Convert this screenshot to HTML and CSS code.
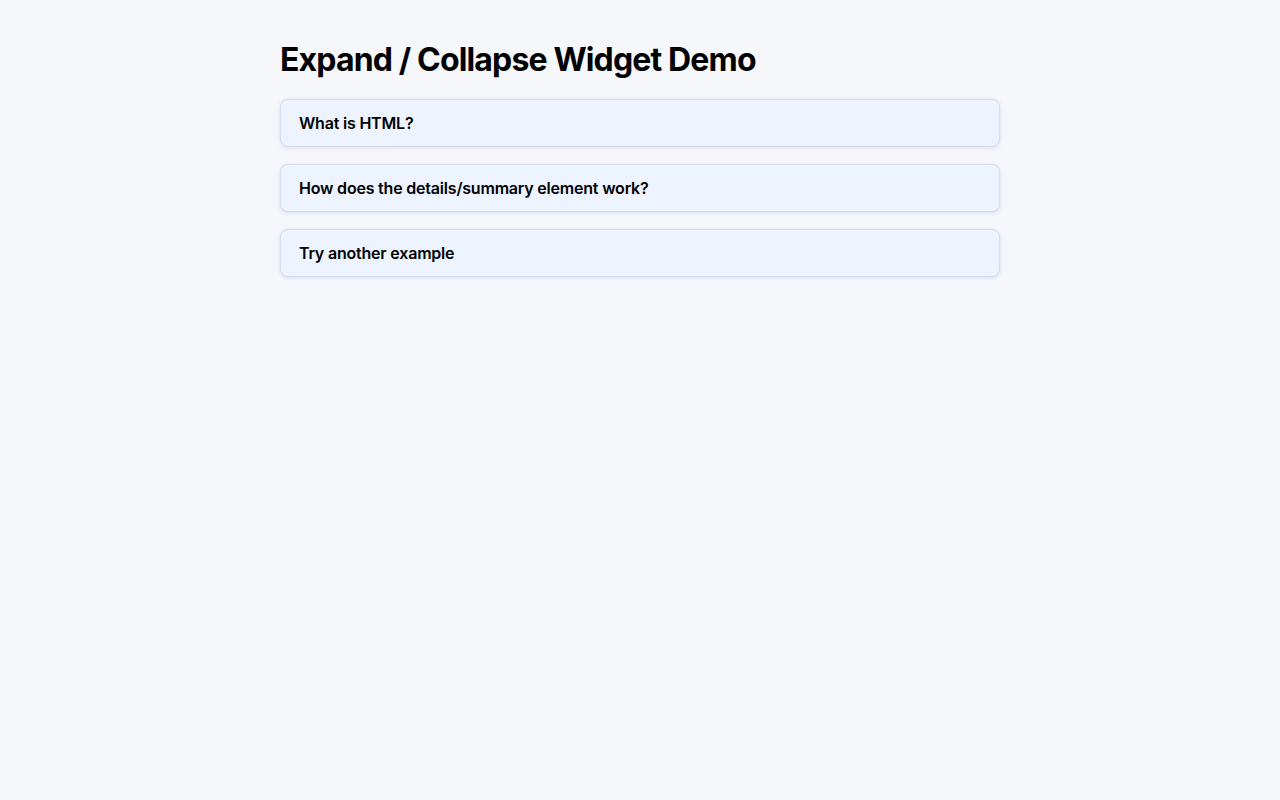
FILE: index.html
```html
<!DOCTYPE html>
<html lang="en">
<head>
<meta charset="utf-8">
<title>Expand / Collapse Widget Demo</title>
<link rel="stylesheet" href="styles.css">
</head>
<body>
<main class="page">
  <h1 class="title">Expand / Collapse Widget Demo</h1>
  <details class="item">
    <summary class="item-head">What is HTML?</summary>
    <div class="item-body">HTML is the standard markup language for web pages.</div>
  </details>
  <details class="item">
    <summary class="item-head">How does the details/summary element work?</summary>
    <div class="item-body">Clicking the summary toggles the visibility of the content.</div>
  </details>
  <details class="item">
    <summary class="item-head">Try another example</summary>
    <div class="item-body">Another piece of hidden content.</div>
  </details>
</main>
</body>
</html>
```

FILE: styles.css
```css
html, body {
  margin: 0;
  padding: 0;
  background: #f5f7fb;
}
body {
  font-family: Inter, "Liberation Sans", Arial, sans-serif;
  color: #000;
}
.page {
  max-width: 720px;
  margin: 0 auto;
  padding: 40px 0;
  display: flex;
  flex-direction: column;
  gap: 17px;
}
.title {
  margin: 0 0 2px;
  font-size: 32px;
  line-height: 40px;
  font-weight: 700;
  letter-spacing: -0.85px;
}
.item {
  background: #edf3ff;
  border: 1px solid #d3dcea;
  border-radius: 8px;
  box-shadow: 0 1px 4px rgba(60, 80, 130, 0.15);
}
.item-head {
  list-style: none;
  padding: 12px 18px;
  font-size: 16px;
  line-height: 22px;
  font-weight: 600;
  letter-spacing: -0.2px;
  cursor: pointer;
}
.item-head::-webkit-details-marker {
  display: none;
}
.item-body {
  padding: 0 18px 14px;
  font-size: 15px;
}
```
